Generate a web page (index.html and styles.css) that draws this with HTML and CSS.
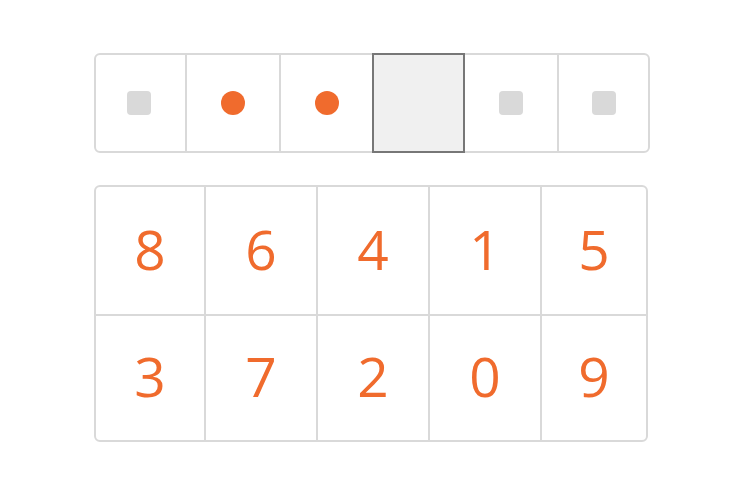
FILE: index.html
```html
<!DOCTYPE html>
<html>
<head>
<meta charset="utf-8">
<link rel="stylesheet" href="styles.css">
</head>
<body>
<div class="page">
  <div class="slots">
    <div class="slot s0"><span class="pending"></span></div>
    <div class="slot s1"><span class="filled"></span></div>
    <div class="slot s2"><span class="filled"></span></div>
    <div class="slot s3 current"></div>
    <div class="slot s4"><span class="pending"></span></div>
    <div class="slot s5"><span class="pending"></span></div>
  </div>
  <div class="keypad">
    <div class="key c0">8</div>
    <div class="key c1">6</div>
    <div class="key c2">4</div>
    <div class="key c3">1</div>
    <div class="key c4">5</div>
    <div class="key c0 r1">3</div>
    <div class="key c1 r1">7</div>
    <div class="key c2 r1">2</div>
    <div class="key c3 r1">0</div>
    <div class="key c4 r1">9</div>
  </div>
</div>
</body>
</html>
```

FILE: styles.css
```css
html, body {
  margin: 0;
  padding: 0;
  background: #ffffff;
}
body {
  font-family: "Open Sans", "DejaVu Sans", sans-serif;
}
.page {
  padding: 53px 0 0 94px;
  display: flex;
  flex-direction: column;
  gap: 32px;
}
.slots {
  width: 552px;
  height: 96px;
  border: 2px solid #d9d9d9;
  border-radius: 6px;
  display: grid;
  grid-template-columns: 89px 94px 93px 93px 92px 91px;
}
.slot {
  display: flex;
  align-items: center;
  justify-content: center;
  border-left: 2px solid #d9d9d9;
}
.slot.s0 { border-left: 0; padding-right: 3px; }
.slot.s4 { border-left: 0; }
.slot.current {
  margin: -2px 0;
  border: 2px solid #777777;
  background: #f0f0f0;
  position: relative;
  z-index: 1;
}
.pending {
  width: 24px;
  height: 24px;
  border-radius: 4px;
  background: #d9d9d9;
}
.filled {
  width: 24px;
  height: 24px;
  border-radius: 50%;
  background: #f06b2d;
}
.keypad {
  width: 550px;
  border: 2px solid #d9d9d9;
  border-radius: 6px;
  display: grid;
  grid-template-columns: 108px 112px 112px 112px 106px;
  grid-template-rows: 127px 126px;
}
.key {
  display: flex;
  align-items: center;
  justify-content: center;
  padding-bottom: 5px;
  border-left: 2px solid #d9d9d9;
  color: #f06b2d;
  font-size: 55px;
  font-weight: 400;
  line-height: 1;
}
.key.c0 { border-left: 0; }
.key.r1 { border-top: 2px solid #d9d9d9; }
```
